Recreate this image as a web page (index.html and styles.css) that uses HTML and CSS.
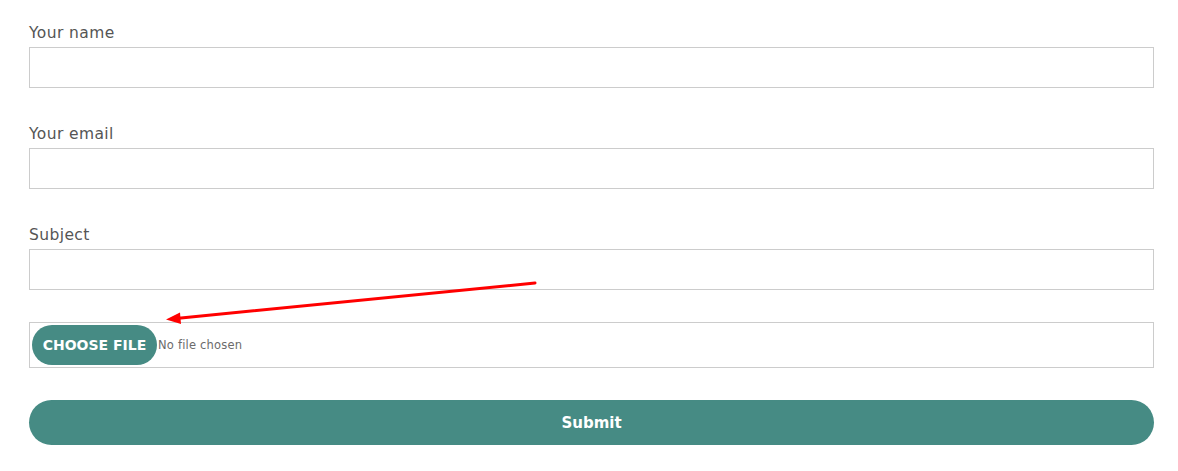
FILE: index.html
```html
<!DOCTYPE html>
<html lang="en">
<head>
  <meta charset="UTF-8">
  <title>Contact</title>
  <link rel="stylesheet" href="styles.css">
</head>
<body>

  <form class="contact-form">
    <div class="field">
      <label for="name">Your name</label>
      <input type="text" id="name">
    </div>

    <div class="field">
      <label for="email">Your email</label>
      <input type="email" id="email">
    </div>

    <div class="field">
      <label for="subject">Subject</label>
      <input type="text" id="subject">
    </div>

    <!-- Campo de arquivo -->
    <div class="file-field">
      <label class="file-btn" for="attachment">Choose file</label>
      <span class="file-name">No file chosen</span>
      <input type="file" id="attachment" class="file-input">
    </div>

    <button type="submit" class="submit-btn">Submit</button>
  </form>

  <!-- Seta vermelha -->
  <svg class="arrow" width="1178" height="471" viewBox="0 0 1178 471">
    <line x1="535" y1="283" x2="176" y2="318.5" stroke="#ff0000" stroke-width="3" stroke-linecap="round"/>
    <polygon points="166,319.5 180,312.5 181,324" fill="#ff0000"/>
  </svg>

</body>
</html>
```

FILE: styles.css
```css
body {
  margin: 0;
  padding: 0;
  background: #fff;
  font-family: 'DejaVu Sans', Verdana, sans-serif;
  position: relative;
}

.contact-form {
  width: 1125px;
  padding: 23px 0 0 29px;
}

.field {
  margin-bottom: 36px;
}

.field label {
  display: block;
  font-size: 15.5px;
  line-height: 20px;
  letter-spacing: 0.4px;
  color: #555555;
  margin-bottom: 4px;
}

.field input {
  display: block;
  box-sizing: border-box;
  width: 100%;
  height: 41px;
  border: 1px solid #cccccc;
  margin: 0;
  padding: 0 10px;
  font: inherit;
}

.file-field {
  display: flex;
  align-items: center;
  box-sizing: border-box;
  height: 46px;
  margin-top: -4px;
  padding: 2px;
  border: 1px solid #cccccc;
}

.file-btn {
  display: flex;
  align-items: center;
  justify-content: center;
  width: 125px;
  height: 40px;
  border-radius: 20px;
  background-color: #468b84;
  color: white;
  font-size: 14px;
  font-weight: bold;
  text-transform: uppercase;
  cursor: pointer;
}

.file-name {
  margin-left: 1px;
  font-size: 11.5px;
  letter-spacing: 0.2px;
  color: #6b6b6b;
}

.file-input {
  display: none;
}

.submit-btn {
  display: block;
  width: 100%;
  height: 45px;
  margin-top: 32px;
  border: none;
  border-radius: 23px;
  background-color: #468b84;
  color: white;
  font-family: inherit;
  font-size: 15px;
  font-weight: bold;
  cursor: pointer;
}

.arrow {
  position: absolute;
  top: 0;
  left: 0;
  pointer-events: none;
}
```
